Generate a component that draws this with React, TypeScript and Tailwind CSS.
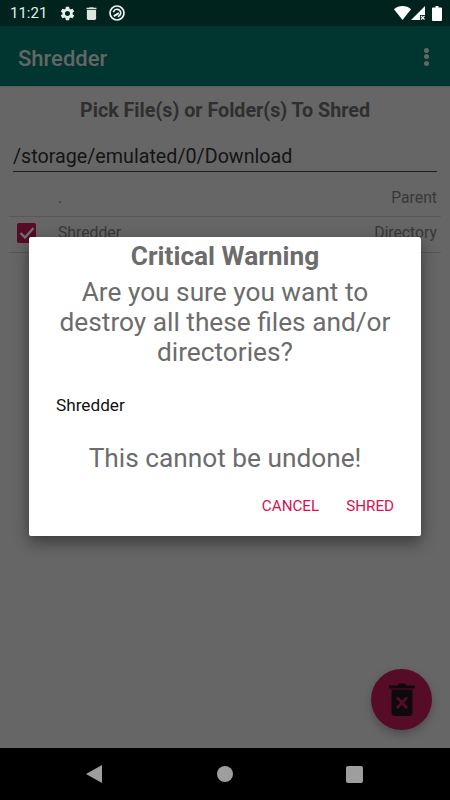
import React from "react";

function StatusBar() {
  return (
    <div className="h-[26px] bg-[#00231e] flex items-center pl-[10px] pr-[8px] shrink-0">
      <span className="text-[15px] text-[#e6ebe9] leading-none">11:21</span>
      <div className="ml-[12px] flex items-center">
        <svg width="17" height="17" viewBox="0 0 24 24" fill="#e8edeb">
          <path d="M19.14 12.94c.04-.3.06-.61.06-.94s-.02-.64-.07-.94l2.03-1.58a.49.49 0 0 0 .12-.61l-1.92-3.32a.488.488 0 0 0-.59-.22l-2.39.96c-.5-.38-1.03-.7-1.62-.94l-.36-2.54a.484.484 0 0 0-.48-.41h-3.84c-.24 0-.43.17-.47.41l-.36 2.54c-.59.24-1.13.57-1.62.94l-2.39-.96c-.22-.08-.47 0-.59.22L2.74 8.87c-.12.21-.08.47.12.61l2.03 1.58c-.05.3-.09.63-.09.94s.02.64.07.94l-2.03 1.58a.49.49 0 0 0-.12.61l1.92 3.32c.12.22.37.29.59.22l2.39-.96c.5.38 1.03.7 1.62.94l.36 2.54c.05.24.24.41.48.41h3.84c.24 0 .44-.17.47-.41l.36-2.54c.59-.24 1.13-.56 1.62-.94l2.39.96c.22.08.47 0 .59-.22l1.92-3.32c.12-.22.07-.47-.12-.61l-2.01-1.58zM12 15.6c-1.98 0-3.6-1.62-3.6-3.6s1.62-3.6 3.6-3.6 3.6 1.62 3.6 3.6-1.62 3.6-3.6 3.6z" />
        </svg>
        <svg width="17" height="17" viewBox="0 0 24 24" fill="#dfe5e2" className="ml-[7px]">
          <path d="M5.500 19c0 1.100.9 2 2 2h9c1.100 0 2-.9 2-2V7h-13v12zM19 4h-3.500l-1-1h-5l-1 1H5v2h14V4z" />
        </svg>
        <svg width="16" height="16" viewBox="0 0 16 16" fill="none" stroke="#eef2f0" strokeWidth="1.700" className="ml-[8.500px]">
          <circle cx="8" cy="8" r="7" />
          <path d="M4.400 7.200A3.700 3.700 0 0 1 8.800 4.400 3.700 3.700 0 0 1 11.600 8.800 3.700 3.700 0 0 1 8.800 11.600" />
          <path d="M4.800 11.200 9.800 8.200" strokeWidth="2" />
        </svg>
      </div>
      <div className="ml-auto flex items-center">
        <svg width="17" height="14" viewBox="0 0 17 14" fill="#ffffff">
          <path d="M0 3.300C2.400 1.100 5.300 0 8.500 0S14.600 1.100 17 3.300L8.500 14z" />
        </svg>
        <svg width="14" height="14" viewBox="0 0 14 14" fill="#ffffff">
          <path d="M0 14 14 0v9H9v5z" />
          <path d="M10 10l3.500 3.500M13.500 10 10 13.500" stroke="#ffffff" strokeWidth="1.100" />
        </svg>
        <svg width="10" height="15" viewBox="0 0 10 15" fill="#ffffff" className="ml-[7px]">
          <path d="M1 1.500h2.500V0h3v1.500H9a1 1 0 0 1 1 1V14a1 1 0 0 1-1 1H1a1 1 0 0 1-1-1V2.500a1 1 0 0 1 1-1z" />
        </svg>
      </div>
    </div>
  );
}

function AppBar() {
  return (
    <div className="h-[61px] bg-[#003530] flex items-center justify-between pl-[18px] pr-[21.5px] pt-[5px] shrink-0 border-b border-[#585f5d]">
      <span className="text-[22px] font-medium text-[#666666] leading-none">Shredder</span>
      <div className="flex flex-col gap-[1.500px] -mt-[4px]">
        <div className="w-[5px] h-[5px] rounded-full bg-[#666666]" />
        <div className="w-[5px] h-[5px] rounded-full bg-[#666666]" />
        <div className="w-[5px] h-[5px] rounded-full bg-[#666666]" />
      </div>
    </div>
  );
}

function Content() {
  return (
    <div className="flex-1 bg-[#666666] relative flex flex-col">
      <div className="text-center text-[19.690px] font-bold text-[#2f2f2f] mt-[13px] leading-[22px]">
        Pick File(s) or Folder(s) To Shred
      </div>
      <div className="mx-[13px] mt-[23px] border-b border-[#1f1f1f] text-[19.690px] text-[#141414] leading-[24px] h-[27px]">
        /storage/emulated/0/Download
      </div>
      <div className="mx-[9px] mt-[12px] pr-[4px] pb-[4px] h-[33px] flex items-center justify-between border-b border-[#585858]">
        <span className="ml-[49px] text-[15.750px] text-[#383838]">.</span>
        <span className="text-[15.750px] text-[#383838]">Parent</span>
      </div>
      <div className="mx-[9px] pr-[4px] pb-[3px] h-[36px] flex items-center justify-between border-b border-[#585858]">
        <div className="flex items-center">
          <div className="w-[19px] h-[20px] rounded-[2px] bg-[#560b26] flex items-center justify-center ml-[8px]">
            <svg width="16" height="16" viewBox="0 0 16 16" fill="none" stroke="#707070" strokeWidth="2.400">
              <path d="M1.500 8 6 12.500 14.500 3" />
            </svg>
          </div>
          <span className="ml-[22px] text-[15.750px] text-[#383838]">Shredder</span>
        </div>
        <span className="text-[15.750px] text-[#383838]">Directory</span>
      </div>
      <div className="absolute right-[18px] bottom-[18px] w-[61px] h-[61px] rounded-full bg-[#560b26] shadow-[0_4px_8px_rgba(0,0,0,0.25)] flex items-center justify-center">
        <svg width="26" height="33" viewBox="0 0 26 33" fill="#0e0a0c">
          <path d="M0 2.500h8.500L10 .5h6l1.500 2H26v3H0z" />
          <path d="M2.500 6.500h21V29a4 4 0 0 1-4 4h-13a4 4 0 0 1-4-4z" />
          <path d="M8 14.500 18 25M18 14.500 8 25" stroke="#560b26" strokeWidth="2.800" fill="none" />
        </svg>
      </div>
    </div>
  );
}

function NavBar() {
  return (
    <div className="h-[52px] bg-black flex items-center shrink-0 pl-[86px]">
      <svg width="16" height="18" viewBox="0 0 16 18" fill="#9e9e9e">
        <path d="M16 0v18L0 9z" />
      </svg>
      <div className="w-[16px] h-[16px] rounded-full bg-[#9e9e9e] ml-[115px]" />
      <div className="w-[17px] h-[17px] rounded-[2px] bg-[#9e9e9e] ml-[113px]" />
    </div>
  );
}

export default function App() {
  return (
    <div className="relative w-[450px] h-[800px] flex flex-col overflow-hidden font-['Roboto',sans-serif]">
      <StatusBar />
      <AppBar />
      <Content />
      <NavBar />
      <div className="absolute left-[29px] top-[237px] w-[392px] h-[299px] bg-white rounded-[2px] shadow-[0_6px_16px_rgba(0,0,0,0.45)] flex flex-col">
        <div className="text-center text-[26.250px] font-bold text-[#6c6c6c] leading-[30px] mt-[4px]">Critical Warning</div>
        <div className="text-center text-[26.250px] text-[#6c6c6c] leading-[30px] mt-[6px] px-[20px]">
          Are you sure you want to destroy all these files and/or directories?
        </div>
        <div className="text-[17.200px] text-[#111111] leading-[20px] mt-[28px] ml-[27px]">Shredder</div>
        <div className="text-center text-[26.250px] text-[#6c6c6c] leading-[30px] mt-[28px]">This cannot be undone!</div>
        <div className="flex justify-end gap-[27px] pr-[27px] mt-[23px] text-[15.200px] font-normal text-[#d81050] leading-[20px]">
          <span>CANCEL</span>
          <span>SHRED</span>
        </div>
      </div>
    </div>
  );
}
